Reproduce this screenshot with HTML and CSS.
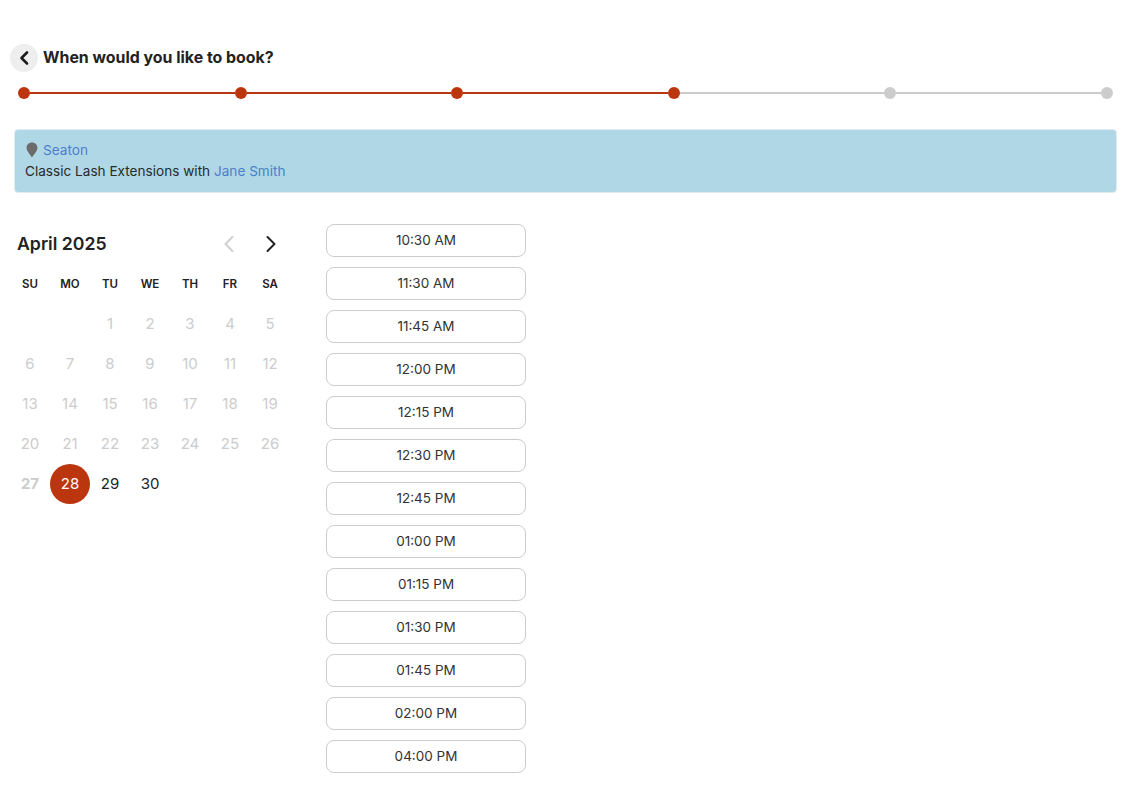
FILE: index.html
```html
<!DOCTYPE html>
<html lang="en">
<head>
<meta charset="utf-8">
<title>When would you like to book?</title>
<link rel="stylesheet" href="styles.css">
</head>
<body>
<header class="head">
  <button class="back" aria-label="Back">
    <svg width="12" height="16" viewBox="0 0 12 16"><path d="M9 2.500 3.500 8 9 13.500" fill="none" stroke="#1c1c1c" stroke-width="2.600" stroke-linecap="round" stroke-linejoin="round"/></svg>
  </button>
  <h1 class="title">When would you like to book?</h1>
</header>
<div class="stepper">
  <span class="dot on"></span><span class="line on"></span>
  <span class="dot on"></span><span class="line on"></span>
  <span class="dot on"></span><span class="line on"></span>
  <span class="dot on"></span><span class="line"></span>
  <span class="dot"></span><span class="line"></span>
  <span class="dot"></span>
</div>
<section class="banner">
  <div class="loc">
    <svg class="pin" width="12" height="16" viewBox="0 0 12 16"><path d="M6 15.500C4.600 13 .6 9.600.6 5.800.6 2.800 3 .6 6 .6s5.400 2.200 5.400 5.200C11.400 9.600 7.400 13 6 15.500Z" fill="#6b6b6b"/></svg>
    <a class="link">Seaton</a>
  </div>
  <div class="svc">Classic Lash Extensions with <a class="link">Jane Smith</a></div>
</section>
<main class="content">
  <section class="cal">
    <div class="cal-head">
      <h2 class="month">April 2025</h2>
      <div class="navs">
        <svg width="24" height="24" viewBox="0 0 24 24"><path d="M15.500 5 8.500 12l7 7" fill="none" stroke="#cfcfcf" stroke-width="2" stroke-linecap="round" stroke-linejoin="round"/></svg>
        <svg width="24" height="24" viewBox="0 0 24 24"><path d="m8.500 5 7 7-7 7" fill="none" stroke="#222" stroke-width="2" stroke-linecap="round" stroke-linejoin="round"/></svg>
      </div>
    </div>
    <div class="grid">
      <span class="wd">SU</span><span class="wd">MO</span><span class="wd">TU</span><span class="wd">WE</span><span class="wd">TH</span><span class="wd">FR</span><span class="wd">SA</span>
      <span class="d"></span><span class="d"></span><span class="d off">1</span><span class="d off">2</span><span class="d off">3</span><span class="d off">4</span><span class="d off">5</span>
      <span class="d off">6</span><span class="d off">7</span><span class="d off">8</span><span class="d off">9</span><span class="d off">10</span><span class="d off">11</span><span class="d off">12</span>
      <span class="d off">13</span><span class="d off">14</span><span class="d off">15</span><span class="d off">16</span><span class="d off">17</span><span class="d off">18</span><span class="d off">19</span>
      <span class="d off">20</span><span class="d off">21</span><span class="d off">22</span><span class="d off">23</span><span class="d off">24</span><span class="d off">25</span><span class="d off">26</span>
      <span class="d off today">27</span><span class="d sel">28</span><span class="d">29</span><span class="d">30</span>
    </div>
  </section>
  <section class="slots">
    <button class="slot">10:30 AM</button>
    <button class="slot">11:30 AM</button>
    <button class="slot">11:45 AM</button>
    <button class="slot">12:00 PM</button>
    <button class="slot">12:15 PM</button>
    <button class="slot">12:30 PM</button>
    <button class="slot">12:45 PM</button>
    <button class="slot">01:00 PM</button>
    <button class="slot">01:15 PM</button>
    <button class="slot">01:30 PM</button>
    <button class="slot">01:45 PM</button>
    <button class="slot">02:00 PM</button>
    <button class="slot">04:00 PM</button>
  </section>
</main>
</body>
</html>
```
FILE: styles.css
```css
* { box-sizing: border-box; }
html, body { margin: 0; }
body {
  font-family: "Inter", "Liberation Sans", sans-serif;
  color: #222;
  background: #fff;
  padding: 44px 15px 0 10px;
  height: 796px;
  overflow: hidden;
}
.head { display: flex; align-items: center; gap: 5px; height: 28px; }
.back {
  width: 28px; height: 28px; border: 0; border-radius: 50%; padding: 0;
  background: #eee; display: flex; align-items: center; justify-content: center;
}
.title { margin: 0 0 2px; font-size: 15.900px; font-weight: 700; color: #222; }
.stepper { display: flex; align-items: center; margin: 15px 4px 0 8px; height: 12px; }
.dot { width: 12px; height: 12px; border-radius: 50%; background: #ccc; flex: none; }
.dot.on { background: #bb360e; }
.line { flex: 1; height: 2px; background: #ccc; }
.line.on { background: #bb360e; }
.banner {
  margin: 30px 0 0 4px; height: 64px; padding: 10px 10px 0;
  background: #afd7e6; border: 1px solid #e2edf1; border-radius: 4px;
  font-size: 13.600px; line-height: 21px;
}
.loc { display: flex; align-items: center; gap: 5px; padding-left: 1px; }
.pin { margin-top: -1px; flex: none; }
.link { color: #4d7fcb; }
.svc { color: #2a2a2a; }
.content { display: flex; align-items: flex-start; margin-top: 31px; gap: 36px; }
.cal { width: 280px; }
.cal-head { display: flex; justify-content: space-between; align-items: center; height: 40px; padding: 0 7px; }
.month { margin: 0 0 2px; font-size: 17.700px; font-weight: 600; color: #222; }
.navs { display: flex; align-items: center; gap: 18px; }
.grid { display: grid; grid-template-columns: repeat(7, 40px); grid-auto-rows: 40px; }
.wd {
  display: flex; align-items: center; justify-content: center;
  font-size: 11.500px; font-weight: 600; color: #222;
}
.d {
  display: flex; align-items: center; justify-content: center; padding-bottom: 2px;
  font-size: 15px; color: #222; border-radius: 50%;
}
.off { color: #ccc; }
.today { font-weight: 700; }
.sel { background: #bb360e; color: #fff; }
.slots { display: flex; flex-direction: column; gap: 10px; width: 200px; }
.slot {
  height: 33px; border: 1px solid #ccc; border-radius: 8px; background: #fff;
  font-family: inherit; font-size: 13.500px; color: #333; padding: 0 0 2px;
}
```
